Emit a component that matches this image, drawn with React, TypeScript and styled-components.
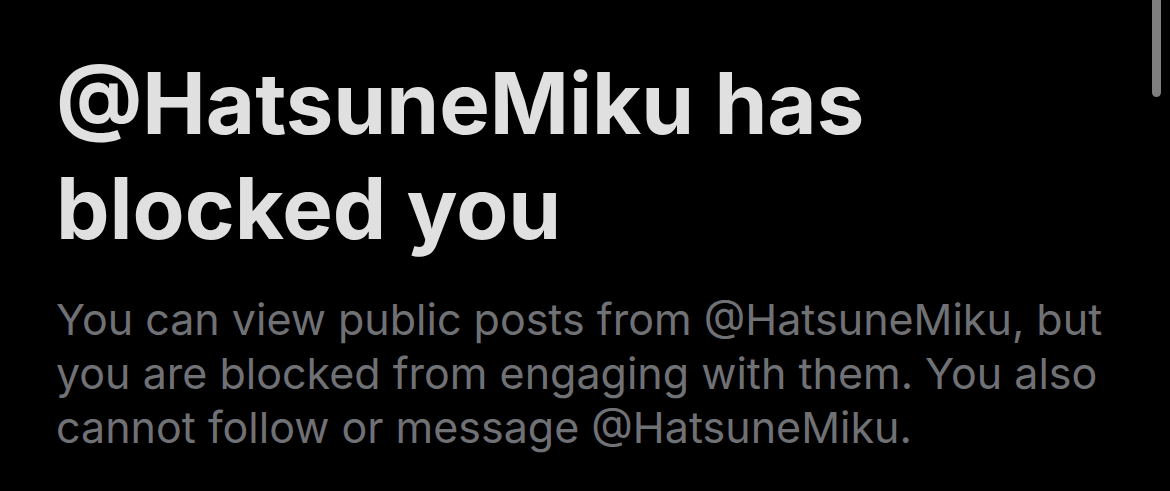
import styled, { createGlobalStyle } from "styled-components";

const GlobalStyle = createGlobalStyle`
  html, body {
    margin: 0;
    padding: 0;
    background: #000;
  }
`;

export default function App() {
  return (
    <>
      <GlobalStyle />
      <Screen>
        <ScrollThumb />
        <Notice>
          <Heading>@HatsuneMiku has blocked you</Heading>
          <Body>
            You can view public posts from @HatsuneMiku, but you are blocked
            from engaging with them. You also cannot follow or message
            @HatsuneMiku.
          </Body>
        </Notice>
      </Screen>
    </>
  );
}

const Screen = styled.div`
  position: relative;
  width: 1170px;
  height: 491px;
  overflow: hidden;
  background: #000;
`;

const ScrollThumb = styled.div`
  position: absolute;
  top: -10px;
  right: 9px;
  width: 9px;
  height: 107px;
  border-radius: 5px;
  background: #7f7f7f;
`;

const Notice = styled.div`
  display: flex;
  flex-direction: column;
  gap: 31px;
  padding: 51px 40px 0 56px;
`;

const Heading = styled.h1`
  margin: 0;
  width: 960px;
  font-family: Inter, "Liberation Sans", sans-serif;
  font-size: 85px;
  font-weight: 700;
  line-height: 105px;
  letter-spacing: 0;
  color: #e0e0e0;
`;

const Body = styled.p`
  margin: 0;
  width: 1080px;
  font-family: Inter, "Liberation Sans", sans-serif;
  font-size: 43px;
  font-weight: 400;
  line-height: 54px;
  letter-spacing: 0;
  color: #707175;
`;
